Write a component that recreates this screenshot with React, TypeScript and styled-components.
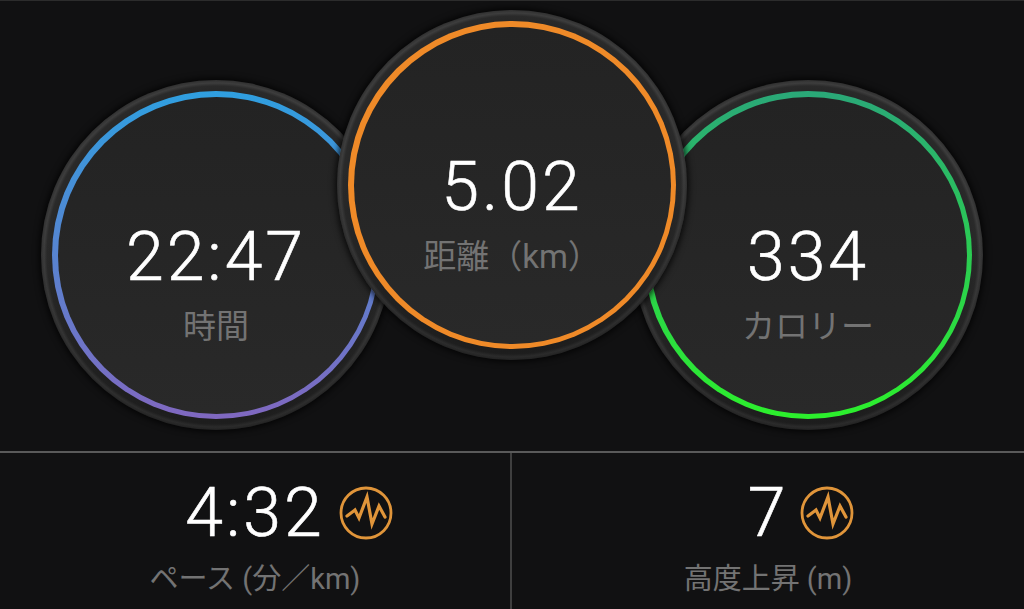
import React from "react";
import styled, { createGlobalStyle } from "styled-components";

const Global = createGlobalStyle`
  html, body { margin: 0; padding: 0; background: #111112; }
  body { font-family: "Roboto", "Noto Sans CJK JP", sans-serif; }
`;

const Page = styled.div`
  width: 1024px;
  height: 609px;
  overflow: hidden;
  background: #111112;
  border-top: 1px solid #2c2c2c;
  box-sizing: border-box;
  display: flex;
  flex-direction: column;
`;

const Dials = styled.div`
  height: 450px;
  flex: none;
  display: flex;
  justify-content: center;
  padding-top: 9px;
  box-sizing: border-box;
`;

const Dial = styled.div<{ $front?: boolean }>`
  width: 350px;
  height: 350px;
  flex: none;
  box-sizing: border-box;
  border-radius: 50%;
  padding: 11px;
  background:
    linear-gradient(180deg, rgba(0, 0, 0, 0) 45%, rgba(0, 0, 0, 0.3) 100%),
    radial-gradient(closest-side, #282828 165px, #2a2a2a 169px, #3d3d3d 172px, #303030 175px);
  box-shadow: 0 0 6px 2px rgba(0, 0, 0, 0.75);
  margin-top: ${(p) => (p.$front ? "0" : "70px")};
  margin-left: ${(p) => (p.$front ? "-54px" : "0")};
  margin-right: ${(p) => (p.$front ? "-54px" : "0")};
  position: relative;
  z-index: ${(p) => (p.$front ? 2 : 1)};
`;

const Ring = styled.div<{ $from: string; $to: string }>`
  width: 100%;
  height: 100%;
  box-sizing: border-box;
  border-radius: 50%;
  padding: 5.5px;
  background: linear-gradient(180deg, ${(p) => p.$from}, ${(p) => p.$to});
`;

const Face = styled.div`
  width: 100%;
  height: 100%;
  border-radius: 50%;
  background: linear-gradient(180deg, #232323, #292929);
  display: flex;
  flex-direction: column;
  align-items: center;
  justify-content: center;
  padding-top: 55px;
  box-sizing: border-box;
`;

const Value = styled.div`
  color: #fff;
  font-size: 68px;
  font-weight: 300;
  line-height: 76px;
  letter-spacing: 3px;
  -webkit-text-stroke: 0.6px #fff;
`;

const Label = styled.div`
  color: #737373;
  font-size: 33px;
  line-height: 40px;
  margin-top: 12px;
`;

const Stats = styled.div`
  flex: 1;
  display: grid;
  grid-template-columns: 510px 1fr;
  border-top: 2px solid #5a5a5a;
`;

const Stat = styled.div<{ $divided?: boolean }>`
  display: flex;
  flex-direction: column;
  align-items: center;
  border-left: ${(p) => (p.$divided ? "2px solid #3f3f3f" : "none")};
  padding-top: 26px;
  box-sizing: border-box;
`;

const StatValue = styled.div`
  position: relative;
  color: #fff;
  font-size: 68px;
  font-weight: 300;
  line-height: 68px;
  letter-spacing: 3px;
  -webkit-text-stroke: 0.6px #fff;
`;

const IconSlot = styled.span<{ $gap: number }>`
  position: absolute;
  left: 100%;
  top: 7px;
  margin-left: ${(p) => p.$gap}px;
  display: flex;
`;

const StatLabel = styled.div`
  color: #737373;
  font-size: 29px;
  line-height: 34px;
  margin-top: 15px;
`;

const PulseIcon = ({ gap }: { gap: number }) => (
  <IconSlot $gap={gap}>
    <svg width="54" height="54" viewBox="0 0 54 54" fill="none" stroke="#e0953a">
      <circle cx="27" cy="27" r="25" strokeWidth="2.8" />
      <path
        d="M8 30 L16 24 L20 32 L28 11 L33 38 L40 20 L46 31"
        strokeWidth="3.2"
        strokeLinejoin="miter"
        strokeLinecap="round"
      />
    </svg>
  </IconSlot>
);

export default function App() {
  return (
    <Page>
      <Global />
      <Dials>
        <Dial>
          <Ring $from="#2f9fe0" $to="#8068c0">
            <Face>
              <Value>22:47</Value>
              <Label>時間</Label>
            </Face>
          </Ring>
        </Dial>
        <Dial $front>
          <Ring $from="#ef8a28" $to="#ef8a28">
            <Face>
              <Value>5.02</Value>
              <Label>距離（km）</Label>
            </Face>
          </Ring>
        </Dial>
        <Dial>
          <Ring $from="#2aa878" $to="#2cf02c">
            <Face>
              <Value>334</Value>
              <Label>カロリー</Label>
            </Face>
          </Ring>
        </Dial>
      </Dials>
      <Stats>
        <Stat>
          <StatValue>
            4:32
            <PulseIcon gap={14} />
          </StatValue>
          <StatLabel>ペース (分／km)</StatLabel>
        </Stat>
        <Stat $divided>
          <StatValue>
            7
            <PulseIcon gap={12} />
          </StatValue>
          <StatLabel>高度上昇 (m)</StatLabel>
        </Stat>
      </Stats>
    </Page>
  );
}
